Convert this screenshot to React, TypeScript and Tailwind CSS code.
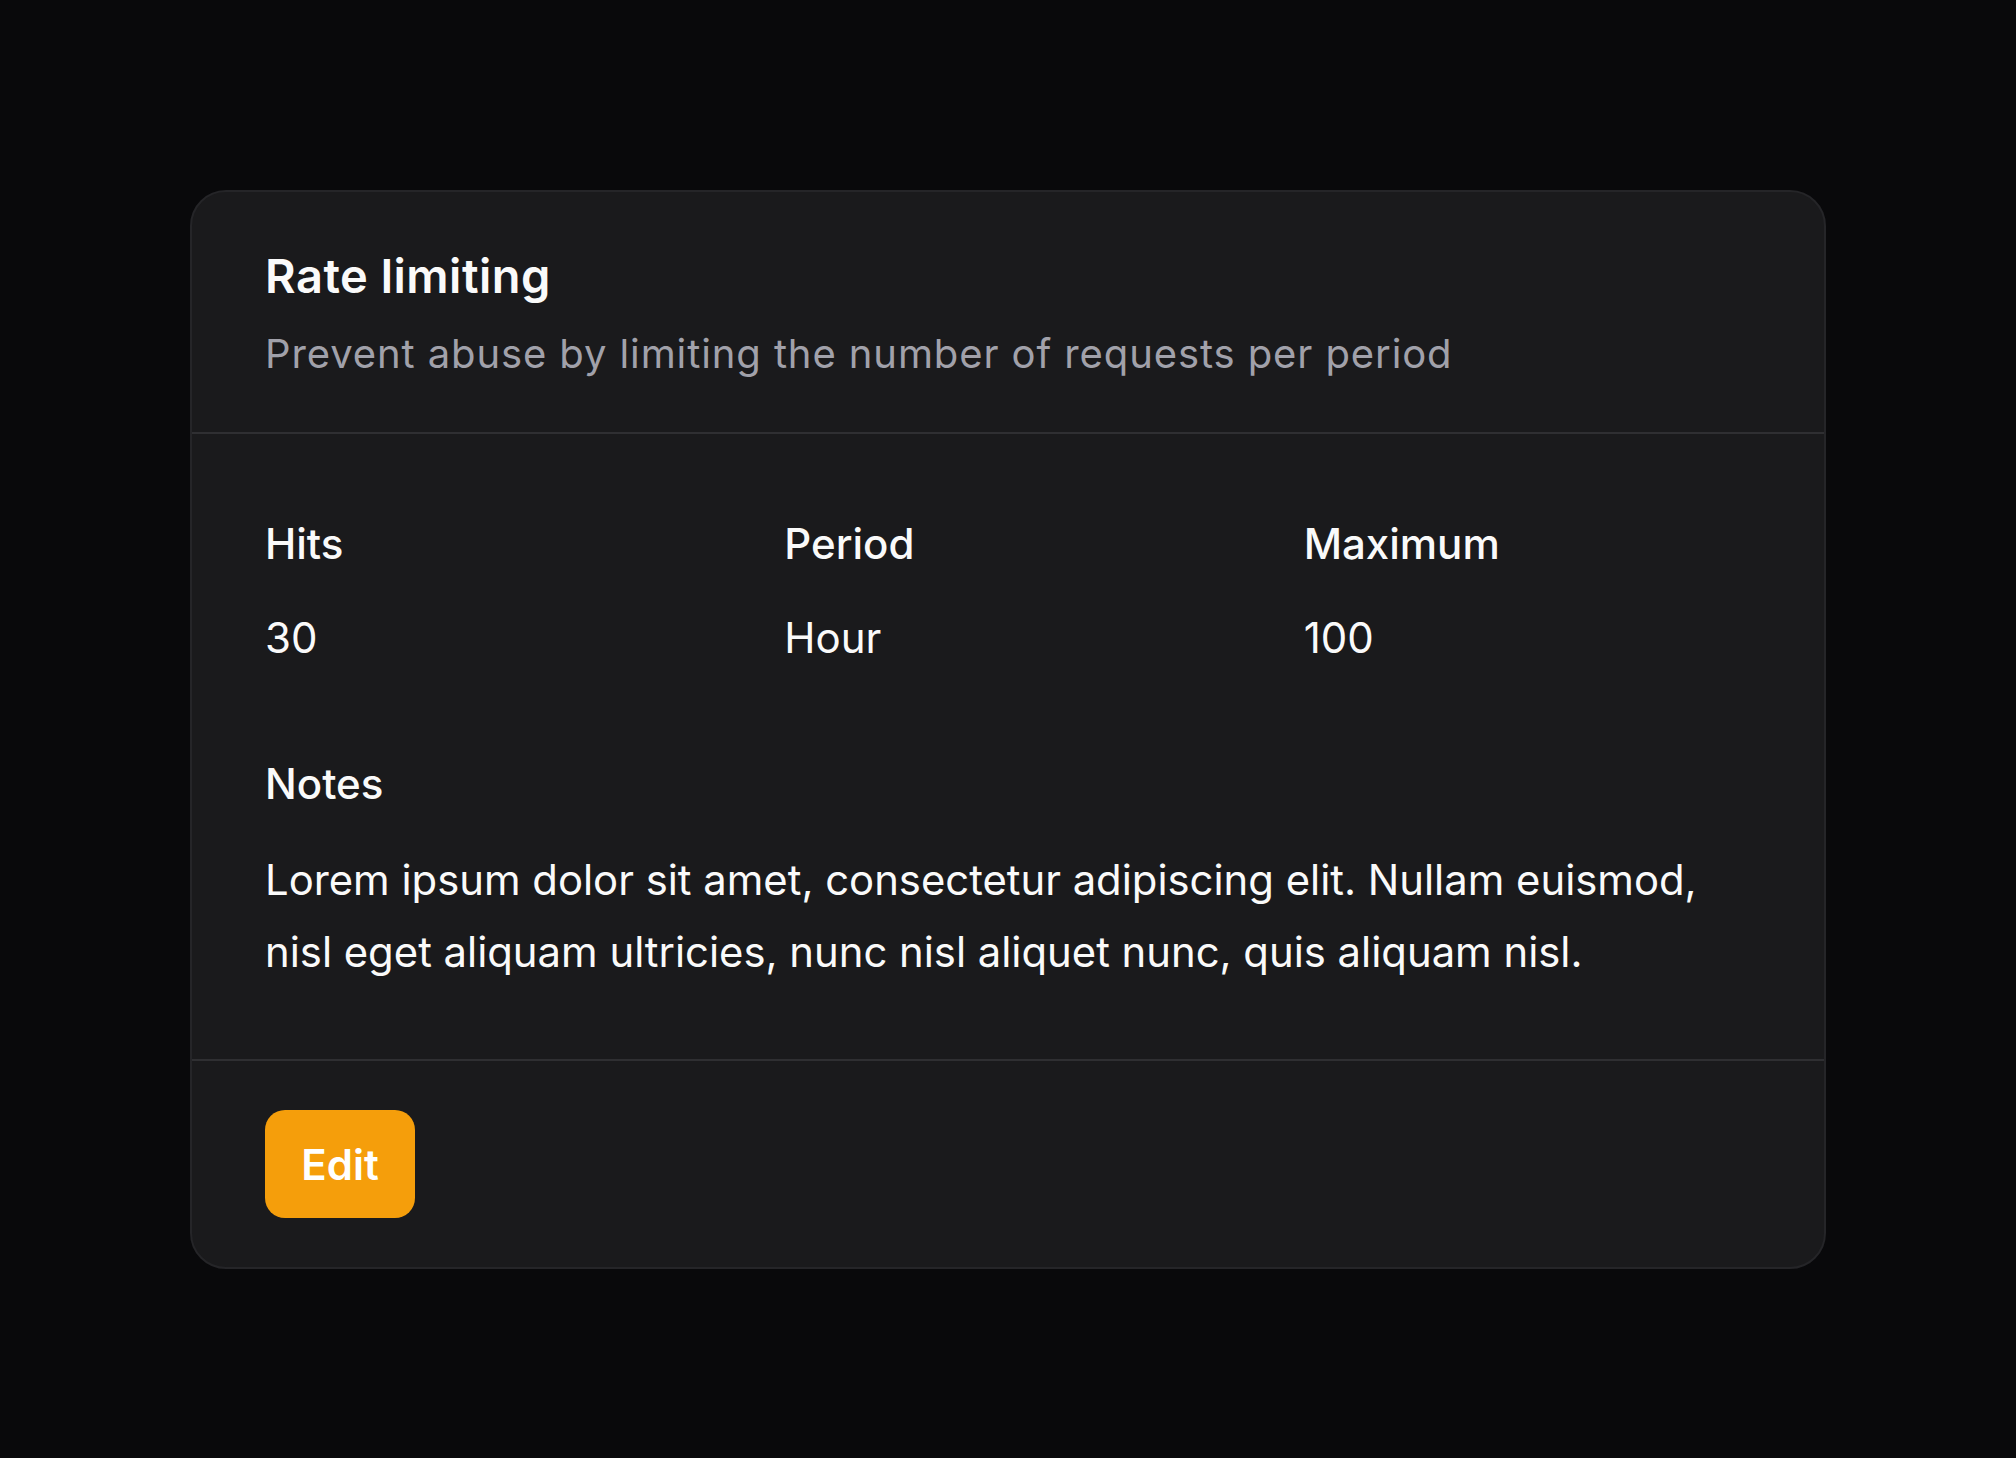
import React from "react";

export default function App() {
  return (
    <div
      className="min-h-[1458px] w-full bg-[#09090b] pl-[190px] pt-[190px]"
      style={{ fontFamily: "Inter, 'Noto Sans', sans-serif" }}
    >
      <div className="w-[1636px] rounded-[36px] border-2 border-[#252528] bg-[#1a1a1c] text-[#fafafa]">
        <div className="border-b-2 border-[#2f2f32] px-[73px] pt-[56px] pb-[54px]">
          <h1 className="text-[47px] font-semibold leading-[56px] tracking-[0.5px]">Rate limiting</h1>
          <p className="mt-[26px] text-[40px] leading-[48px] tracking-[0.9px] text-[#a1a1aa]">
            Prevent abuse by limiting the number of requests per period
          </p>
        </div>
        <div className="border-b-2 border-[#2f2f32] px-[73px] pt-[84px] pb-[71px]">
          <div className="grid grid-cols-3 gap-x-[72px]">
            {[
              ["Hits", "30"],
              ["Period", "Hour"],
              ["Maximum", "100"],
            ].map(([label, value]) => (
              <div key={label} className="flex flex-col">
                <div className="text-[42px] font-medium leading-[52px]">{label}</div>
                <div className="mt-[42px] text-[42px] leading-[52px]">{value}</div>
              </div>
            ))}
          </div>
          <div className="mt-[94px] text-[42px] font-medium leading-[52px]">Notes</div>
          <p className="mt-[34px] text-[41.8px] leading-[72px]">
            Lorem ipsum dolor sit amet, consectetur adipiscing elit. Nullam euismod, nisl eget aliquam ultricies,
            nunc nisl aliquet nunc, quis aliquam nisl.
          </p>
        </div>
        <div className="px-[73px] pt-[49px] pb-[49px]">
          <button className="flex h-[108px] w-[150px] items-center justify-center rounded-[20px] bg-[#f59e0b] text-[42px] font-semibold text-white">
            Edit
          </button>
        </div>
      </div>
    </div>
  );
}
